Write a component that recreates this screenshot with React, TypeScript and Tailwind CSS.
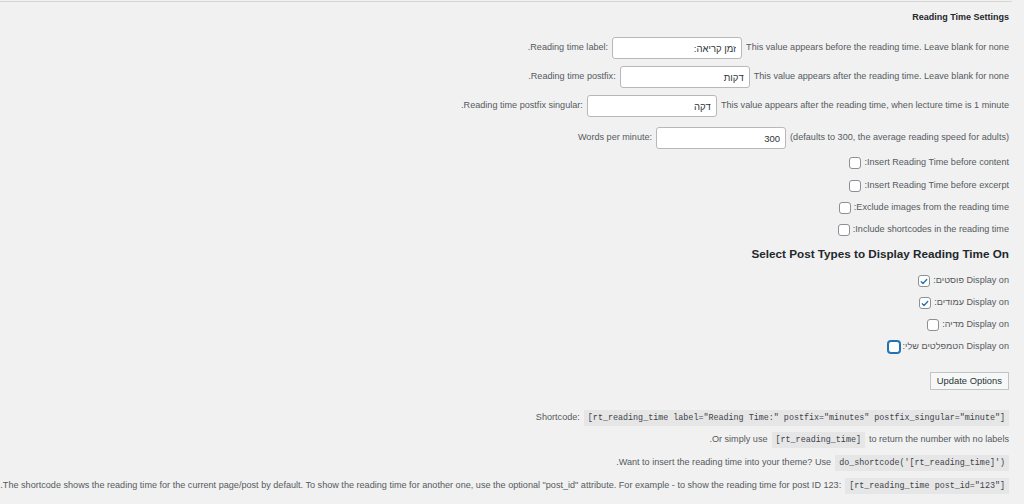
import React from "react";

const sans = "font-['Liberation_Sans','Arial',sans-serif]";
const mono = "font-['Liberation_Mono','Courier_New',monospace]";

function TextField({ value, width = "w-[130px]" }: { value: string; width?: string }) {
  return (
    <input
      type="text"
      dir="rtl"
      defaultValue={value}
      className={`${width} h-[22px] rounded-[3px] border border-[#b8b8b8] bg-white pr-[5px] pl-2 text-right text-[9.5px] text-[#2c3338] outline-none ${sans}`}
    />
  );
}

function Box({ checked = false, focused = false }: { checked?: boolean; focused?: boolean }) {
  return (
    <span
      className={`flex h-[12px] w-[12px] shrink-0 items-center justify-center rounded-[3px] bg-white ${
        focused ? "border-[1.5px] border-[#2271b1] shadow-[0_0_0_1px_#2271b1]" : "border border-[#8c8f94]"
      }`}
    >
      {checked && (
        <svg viewBox="0 0 20 20" className="h-[11px] w-[11px] text-[#2271b1]" aria-hidden>
          <path
            d="M4.5 10.5l3.5 3.5 7.5-8"
            fill="none"
            stroke="currentColor"
            strokeWidth={2.6}
            strokeLinecap="round"
            strokeLinejoin="round"
          />
        </svg>
      )}
    </span>
  );
}

function Code({ children }: { children: React.ReactNode }) {
  return (
    <code className={`whitespace-pre bg-[#e6e6e6] px-[4px] py-[2px] text-[8.4px] leading-[12px] text-[#3c434a] ${mono}`}>
      {children}
    </code>
  );
}

function Row({ mt, gap = "gap-[4px]", children }: { mt: string; gap?: string; children: React.ReactNode }) {
  return <div className={`flex h-[22px] items-center justify-end ${gap} ${mt}`}>{children}</div>;
}

function CheckRow({ mt, label }: { mt: string; label: string }) {
  return (
    <Row mt={mt} gap="gap-[3px]">
      <Box />
      <span>{label}</span>
    </Row>
  );
}

function PostTypeRow({ mt, type, checked, focused }: { mt: string; type: string; checked?: boolean; focused?: boolean }) {
  return (
    <Row mt={mt} gap="gap-[3px]">
      <Box checked={checked} focused={focused} />
      <span className="whitespace-pre">
        <bdi dir="rtl">{type}</bdi> Display on
      </span>
    </Row>
  );
}

export default function App() {
  return (
    <div className={`h-[504px] w-[1024px] overflow-hidden bg-[#f1f1f1] text-[9.1px] text-[#555a60] ${sans}`}>
      {/* thin rule left over from the panel above */}
      <div className="h-[2px] w-[1012px] rounded-br-[3px] border-b border-[#d6d6d6]" />

      <div className="flex flex-col pr-[15px]">
        <div className="mt-[5px] flex h-[22px] items-center justify-end">
          <h3 className="text-[9px] font-bold text-[#23282d]">Reading Time Settings</h3>
        </div>

        <Row mt="mt-[8px]">
          <span>.Reading time label:</span>
          <TextField value="זמן קריאה:" />
          <span>This value appears before the reading time. Leave blank for none</span>
        </Row>
        <Row mt="mt-[7px]">
          <span>.Reading time postfix:</span>
          <TextField value="דקות" />
          <span>This value appears after the reading time. Leave blank for none</span>
        </Row>
        <Row mt="mt-[7px]">
          <span>.Reading time postfix singular:</span>
          <TextField value="דקה" />
          <span>This value appears after the reading time, when lecture time is 1 minute</span>
        </Row>
        <Row mt="mt-[10px]">
          <span>Words per minute:</span>
          <TextField value="300" />
          <span>(defaults to 300, the average reading speed for adults)</span>
        </Row>

        <CheckRow mt="mt-[3px]" label=":Insert Reading Time before content" />
        <CheckRow mt="mt-[1px]" label=":Insert Reading Time before excerpt" />
        <CheckRow mt="mt-0" label=":Exclude images from the reading time" />
        <CheckRow mt="mt-0" label=":Include shortcodes in the reading time" />

        <div className="mt-[2px] flex h-[22px] items-center justify-end">
          <h2 className="text-[11.7px] font-bold text-[#23282d]">Select Post Types to Display Reading Time On</h2>
        </div>

        <PostTypeRow mt="mt-[5px]" type="פוסטים:" checked />
        <PostTypeRow mt="mt-0" type="עמודים:" checked />
        <PostTypeRow mt="mt-0" type="מדיה:" />
        <PostTypeRow mt="mt-0" type="הטמפלטים שלי:" focused />

        <div className="mt-[12px] flex h-[22px] items-center justify-end">
          <button
            type="button"
            className="h-[18px] border border-[#c3c4c7] bg-[#f6f7f7] px-[6px] text-[9.4px] text-[#2c3338]"
          >
            Update Options
          </button>
        </div>

        <Row mt="mt-[15px]">
          <span>Shortcode:</span>
          <Code>[rt_reading_time label="Reading Time:" postfix="minutes" postfix_singular="minute"]</Code>
        </Row>
        <Row mt="mt-0">
          <span>.Or simply use</span>
          <Code>[rt_reading_time]</Code>
          <span>to return the number with no labels</span>
        </Row>
        <Row mt="mt-[1px]">
          <span>.Want to insert the reading time into your theme? Use</span>
          <Code>do_shortcode('[rt_reading_time]')</Code>
        </Row>
        <Row mt="mt-[1px]">
          <span className="whitespace-nowrap">
            .The shortcode shows the reading time for the current page/post by default. To show the reading time for
            another one, use the optional "post_id" attribute. For example - to show the reading time for post ID 123:
          </span>
          <Code>[rt_reading_time post_id="123"]</Code>
        </Row>
      </div>
    </div>
  );
}
